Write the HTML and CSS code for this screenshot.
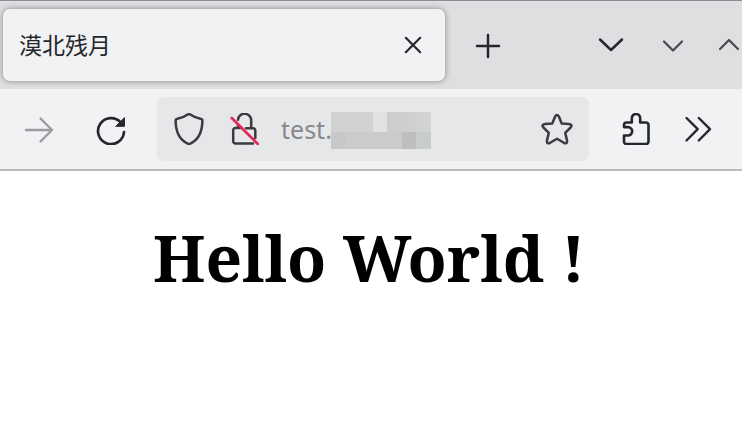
FILE: index.html
```html
<!DOCTYPE html>
<html lang="zh-CN">
<head>
<meta charset="utf-8">
<title>漠北残月</title>
<link rel="stylesheet" href="styles.css">
</head>
<body>
<header class="tabstrip">
  <div class="tab">
    <span class="tab-title">漠北残月</span>
    <svg class="icon" viewBox="0 0 32 32"><path d="M8.8 8.8 23.2 23.2M23.2 8.8 8.8 23.2"/></svg>
  </div>
  <svg class="icon plus" viewBox="0 0 32 32"><path d="M16 6v22M5 17h22"/></svg>
  <svg class="icon tabs-menu" viewBox="0 0 32 32"><path d="M5 10.5 16 21 27 10.5"/></svg>
  <svg class="icon minimize" viewBox="0 0 32 32"><path d="M7 12.5 16 21.5 25 12.5"/></svg>
  <svg class="icon maximize" viewBox="0 0 32 32"><path d="M7 20 16 11 25 20"/></svg>
</header>
<nav class="toolbar">
  <svg class="icon forward" viewBox="0 0 32 32"><path d="M3 17H28.5M17.5 5.5 29 17 17.5 28.5"/></svg>
  <svg class="icon reload" viewBox="0 0 32 32"><path d="M25.6 9.3A13 13 0 1 0 29 19"/><path class="solid" d="M29.5 5V13.3h-8.4z"/></svg>
  <div class="urlbar">
    <svg class="icon shield" viewBox="0 0 32 32"><path d="M16 1.2Q17 1.2 17.8 1.8C21 4.2 24 5.1 27.5 5.8Q29.4 6.1 29.4 8C29.2 19 25 27 17.3 30.6Q16 31.2 14.7 30.6C7 27 2.8 19 2.6 8Q2.6 6.1 4.5 5.8C8 5.1 11 4.2 14.2 1.8Q15 1.2 16 1.2Z"/></svg>
    <svg class="icon lock" viewBox="0 0 32 32"><path d="M9 6.8A6.6 6.6 0 0 1 22.2 8V15M7 15H6.5a2.3 2.3 0 0 0-2.3 2.3v11a2.3 2.3 0 0 0 2.3 2.3H24M17 15.2h7a2.3 2.3 0 0 1 2.3 2.3V25M9 11.5V15H12"/><path class="slash" d="M2.8 5 28.8 31"/></svg>
    <span class="address">test.</span>
    <span class="mask"><i class="a"></i><i class="gap"></i><i class="b"></i><i class="c"></i><i class="d"></i><i class="e"></i><i class="f"></i></span>
    <svg class="icon star" viewBox="0 0 32 32"><path d="M14.1 3.6Q16 .2 17.9 3.6L20.7 10.4 28 11.1Q32 11.7 29.6 14.5L24.2 19.8 26 27.4Q26.5 31.6 22.9 29.8L16 25.7 9.1 29.8Q5.5 31.6 6 27.4L7.8 19.8 2.4 14.5Q0 11.7 4 11.1L11.3 10.4Z"/></svg>
  </div>
  <svg class="icon puzzle" viewBox="0 0 32 32"><path d="M11.8 9.5V5.2a4.2 4.2 0 0 1 8.4 0V9.5H26a2.5 2.5 0 0 1 2.5 2.5V28.5A2.5 2.5 0 0 1 26 31H6.5A2.5 2.5 0 0 1 4 28.5V22.5H8a4.2 4.2 0 0 0 0-8.4H4V12A2.5 2.5 0 0 1 6.5 9.5Z"/></svg>
  <svg class="icon more" viewBox="0 0 32 32"><path d="M4.5 5 15.7 16.2 4.5 27.5M16.8 5 28 16.2 16.8 27.5"/></svg>
</nav>
<main><h1>Hello World !</h1></main>
</body>
</html>
```
FILE: styles.css
```css
* { box-sizing: border-box; }
body {
  margin: 0;
  height: 435px;
  overflow: hidden;
  background: #fff;
  color: #25272b;
  font-family: "Noto Sans", "Noto Sans CJK SC", sans-serif;
}
.icon {
  flex: none;
  width: 32px;
  height: 32px;
  fill: none;
  stroke: currentColor;
  stroke-width: 2.2;
  stroke-linecap: round;
  stroke-linejoin: round;
}
.tabstrip {
  display: flex;
  align-items: center;
  height: 89px;
  padding-left: 3px;
  border-top: 1px solid #8e8e92;
  background: #dedfe1;
  overflow: hidden;
}
.tab {
  display: flex;
  flex: none;
  align-items: center;
  justify-content: space-between;
  width: 442px;
  height: 72px;
  padding: 0 16px;
  border-radius: 7px;
  background: #f1f2f4;
  box-shadow: 0 0 6px rgba(0, 0, 0, .4);
}
.tab-title {
  margin-bottom: 2px;
  font: 23px/32px "Noto Sans CJK SC", sans-serif;
}
.plus { margin-left: 27px; stroke-width: 2.5; }
.tabs-menu { margin-left: 91px; stroke-width: 2.5; }
.minimize { margin-left: 30px; stroke: #47494d; }
.maximize { margin-left: 24px; stroke: #47494d; }
.toolbar {
  display: flex;
  align-items: center;
  height: 82px;
  padding-left: 23px;
  border-bottom: 2px solid #bbbbbe;
  background: #f1f2f4;
}
.forward { color: #9b9c9e; stroke-width: 2.4; }
.reload { margin-left: 40px; stroke-width: 2.7; }
.solid { fill: currentColor; stroke-width: 1; }
.urlbar {
  display: flex;
  flex: none;
  align-items: center;
  width: 432px;
  height: 64px;
  margin-left: 30px;
  padding: 0 16px;
  border-radius: 7px;
  background: #e6e7e9;
  color: #3a3b3e;
}
.shield, .lock, .star { stroke-width: 2.5; }
.lock { margin-left: 24px; }
.slash { stroke: #e22855; stroke-width: 2.7; }
.address {
  width: 50px;
  margin-left: 20px;
  color: #87888b;
  font-size: 25px;
  line-height: 34px;
}
.mask {
  display: grid;
  grid-template: 20px 17px / 15px 27px 14px 15px 14px 15px;
  margin-top: 2px;
}
.a { grid-area: 1 / 1 / 2 / 3; background: #d0d2d2; }
.gap { grid-area: 1 / 3; background: #dfe1e2; }
.b { grid-area: 1 / 4 / 2 / 7; background: linear-gradient(90deg, #cbcdcd, #d1d4d3); }
.c { grid-area: 2 / 1; background: #c6c8c9; }
.d { grid-area: 2 / 2 / 3 / 5; background: #c9cbcc; }
.e { grid-area: 2 / 5; background: #bcbebf; }
.f { grid-area: 2 / 6; background: #c9cccd; }
.star { margin-left: auto; }
.puzzle { margin-left: 31px; stroke-width: 2.6; }
.more { margin-left: 30px; stroke-width: 2.4; }
main { display: flex; padding-top: 43px; padding-left: 153px; }
h1 {
  margin: 0;
  color: #000;
  font: bold 64px/88px "Noto Serif", "DejaVu Serif Condensed", "DejaVu Serif", serif;
  white-space: nowrap;
}
```
